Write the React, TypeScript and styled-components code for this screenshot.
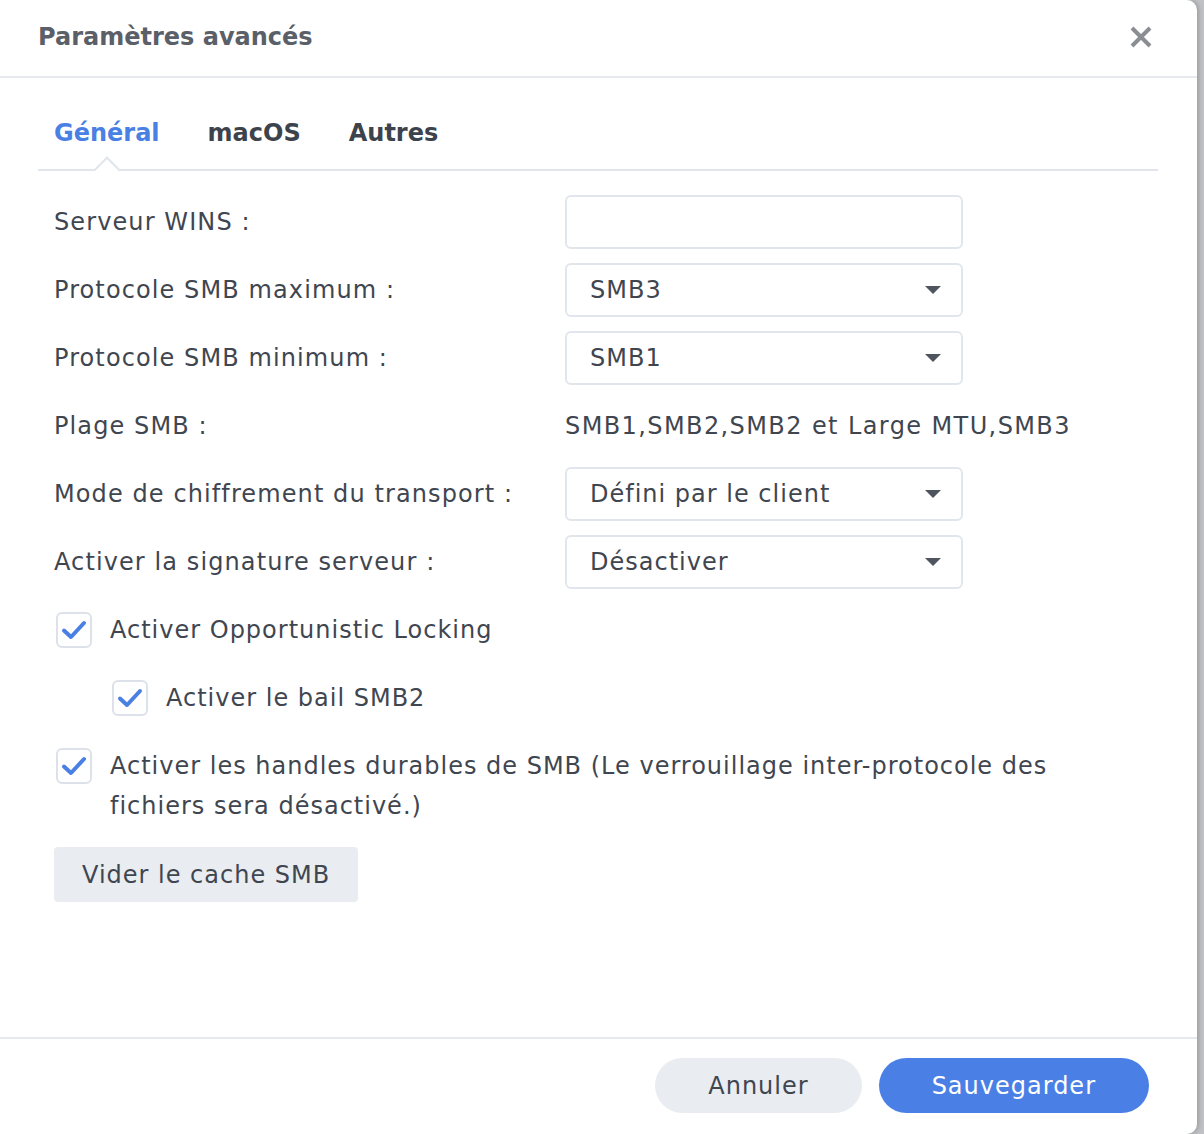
import React from 'react';
import styled, { createGlobalStyle } from 'styled-components';

const GlobalStyle = createGlobalStyle`
	html, body {
		margin: 0;
		padding: 0;
		background: #bfc1c4;
	}
	body {
		font-family: "DejaVu Sans", Verdana, sans-serif;
		color: #3f4650;
	}
`;

const Dialog = styled.div`
	display: flex;
	flex-direction: column;
	width: 1197px;
	height: 1134px;
	background: #ffffff;
	border-radius: 0 10px 10px 0;
	box-shadow: 2px 0 4px rgba(0, 0, 0, 0.18);
	box-sizing: border-box;
`;

const Header = styled.div`
	display: flex;
	align-items: center;
	justify-content: space-between;
	height: 78px;
	padding: 0 44px 2px 38px;
	border-bottom: 2px solid #e6e9ee;
	box-sizing: border-box;
`;

const Title = styled.span`
	font-size: 24px;
	font-weight: bold;
	color: #5b6068;
`;

const CloseButton = styled.button`
	display: flex;
	align-items: center;
	justify-content: center;
	width: 24px;
	height: 24px;
	padding: 0;
	border: none;
	background: none;
	cursor: pointer;
`;

const Body = styled.div`
	flex: 1;
	display: flex;
	flex-direction: column;
	padding: 0 39px 0 38px;
`;

const TabBar = styled.div`
	display: flex;
	gap: 48px;
	height: 93px;
	padding: 0 16px;
	align-items: flex-end;
	border-bottom: 2px solid #e1e5ec;
	box-sizing: border-box;
`;

const Tab = styled.span<{ $active?: boolean }>`
	position: relative;
	font-size: 24px;
	font-weight: bold;
	line-height: 28px;
	padding-bottom: 22px;
	color: ${({ $active }) => ($active ? '#4a7fe4' : '#3d434c')};

	${({ $active }) =>
		$active &&
		`
		&::after {
			content: '';
			position: absolute;
			left: 50%;
			bottom: -9px;
			width: 16px;
			height: 16px;
			background: #ffffff;
			border-top: 2px solid #e1e5ec;
			border-left: 2px solid #e1e5ec;
			transform: translateX(-50%) rotate(45deg);
		}
	`}
`;

const Content = styled.div`
	display: flex;
	flex-direction: column;
	gap: 14px;
	padding: 24px 15px 0 16px;
`;

const FormRow = styled.div`
	display: grid;
	grid-template-columns: 511px 398px;
	align-items: center;
	min-height: 54px;
`;

const Label = styled.span`
	font-size: 24px;
	letter-spacing: 1.1px;
`;

const Field = styled.div`
	display: flex;
	align-items: center;
	justify-content: space-between;
	height: 54px;
	padding: 0 20px 0 23px;
	border: 2px solid #e1e5ec;
	border-radius: 6px;
	box-sizing: border-box;
	font-size: 24px;
	letter-spacing: 1px;
`;

const Value = styled.span`
	font-size: 24px;
	letter-spacing: 1.4px;
	white-space: nowrap;
`;

const CheckRow = styled.label<{ $indent?: boolean }>`
	display: flex;
	align-items: flex-start;
	gap: 18px;
	min-height: 54px;
	padding: 7px 0 7px ${({ $indent }) => ($indent ? '58px' : '2px')};
	box-sizing: border-box;
	font-size: 24px;
	line-height: 40px;
	letter-spacing: 1px;
`;

const CheckBox = styled.span`
	flex: none;
	display: flex;
	align-items: center;
	justify-content: center;
	width: 36px;
	height: 36px;
	margin-top: 2px;
	border: 2px solid #dde2ea;
	border-radius: 6px;
	box-sizing: border-box;
`;

const SecondaryButton = styled.button`
	align-self: flex-start;
	height: 55px;
	padding: 0 28px;
	border: none;
	border-radius: 4px;
	background: #e9ecf1;
	color: #3f4650;
	font-family: inherit;
	font-size: 24px;
	letter-spacing: 1px;
`;

const Footer = styled.div`
	display: flex;
	justify-content: flex-end;
	gap: 17px;
	padding: 19px 48px 21px 0;
	border-top: 2px solid #e6e9ee;
`;

const PillButton = styled.button<{ $primary?: boolean }>`
	height: 55px;
	padding: 0 53px;
	border: none;
	border-radius: 28px;
	font-family: inherit;
	font-size: 24px;
	letter-spacing: 1px;
	background: ${({ $primary }) => ($primary ? '#4a80e6' : '#e9ecf1')};
	color: ${({ $primary }) => ($primary ? '#ffffff' : '#3f4650')};
`;

const Caret = () => (
	<svg width="16" height="9" viewBox="0 0 16 9">
		<path d="M0 0 H16 L8 8 Z" fill="#4f555e" />
	</svg>
);

const Check = () => (
	<svg width="26" height="22" viewBox="0 0 26 22">
		<path
			d="M3 11.5 L10 18 L23 4"
			fill="none"
			stroke="#4a7fe4"
			strokeWidth="4"
			strokeLinecap="round"
			strokeLinejoin="round"
		/>
	</svg>
);

const selects = [
	{ label: 'Protocole SMB maximum :', value: 'SMB3' },
	{ label: 'Protocole SMB minimum :', value: 'SMB1' },
];

const App = (): JSX.Element => {
	return (
		<>
			<GlobalStyle />
			<Dialog>
				<Header>
					<Title>Paramètres avancés</Title>
					<CloseButton aria-label="Fermer">
						<svg width="22" height="22" viewBox="0 0 22 22">
							<path
								d="M2 2 L20 20 M20 2 L2 20"
								stroke="#8a8d92"
								strokeWidth="4"
								strokeLinecap="butt"
							/>
						</svg>
					</CloseButton>
				</Header>
				<Body>
					<TabBar>
						<Tab $active>Général</Tab>
						<Tab>macOS</Tab>
						<Tab>Autres</Tab>
					</TabBar>
					<Content>
						<FormRow>
							<Label>Serveur WINS :</Label>
							<Field />
						</FormRow>
						{selects.map((s) => (
							<FormRow key={s.label}>
								<Label>{s.label}</Label>
								<Field>
									{s.value}
									<Caret />
								</Field>
							</FormRow>
						))}
						<FormRow>
							<Label>Plage SMB :</Label>
							<Value>SMB1,SMB2,SMB2 et Large MTU,SMB3</Value>
						</FormRow>
						<FormRow>
							<Label>Mode de chiffrement du transport :</Label>
							<Field>
								Défini par le client
								<Caret />
							</Field>
						</FormRow>
						<FormRow>
							<Label>Activer la signature serveur :</Label>
							<Field>
								Désactiver
								<Caret />
							</Field>
						</FormRow>
						<CheckRow>
							<CheckBox>
								<Check />
							</CheckBox>
							<span>Activer Opportunistic Locking</span>
						</CheckRow>
						<CheckRow $indent>
							<CheckBox>
								<Check />
							</CheckBox>
							<span>Activer le bail SMB2</span>
						</CheckRow>
						<CheckRow>
							<CheckBox>
								<Check />
							</CheckBox>
							<span>
								Activer les handles durables de SMB (Le verrouillage inter-protocole des
								fichiers sera désactivé.)
							</span>
						</CheckRow>
						<SecondaryButton>Vider le cache SMB</SecondaryButton>
					</Content>
				</Body>
				<Footer>
					<PillButton>Annuler</PillButton>
					<PillButton $primary>Sauvegarder</PillButton>
				</Footer>
			</Dialog>
		</>
	);
};

export default App;
